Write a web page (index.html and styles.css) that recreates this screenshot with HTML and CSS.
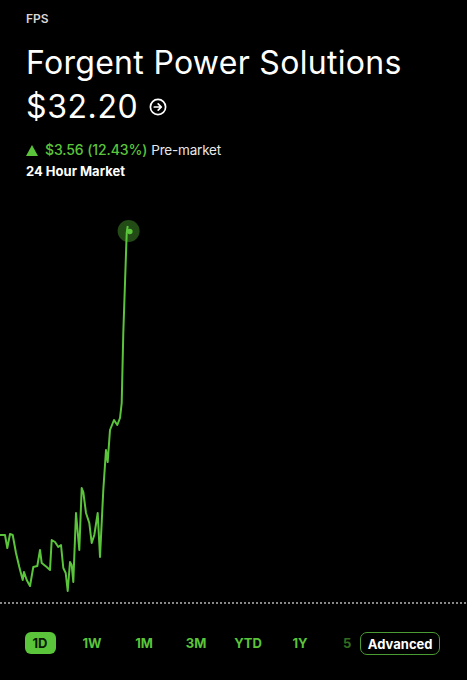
FILE: index.html
```html
<!DOCTYPE html>
<html lang="en">
<head>
    <meta charset="UTF-8">
    <meta name="viewport" content="width=device-width, initial-scale=1.0">
    <title>FPS - Forgent Power Solutions</title>
    <link rel="stylesheet" href="styles.css">
</head>
<body>
    <div class="quote">
        <div class="symbol">FPS</div>
        <h1 class="name">Forgent Power Solutions</h1>
        <div class="price-row">
            <span class="price">$32.20</span>
            <svg class="price-arrow" width="18" height="18" viewBox="0 0 18 18">
                <circle cx="9" cy="9" r="7.6" fill="none" stroke="#fff" stroke-width="1.7"/>
                <path d="M5.3 9H12.3M9.2 5.9L12.3 9L9.2 12.1" fill="none" stroke="#fff" stroke-width="1.7" stroke-linecap="round" stroke-linejoin="round"/>
            </svg>
        </div>
        <div class="change">
            <span class="up-arrow"></span>
            <span class="change-value">$3.56 (12.43%)</span>
            <span class="session">Pre-market</span>
        </div>
        <div class="market">24 Hour Market</div>
    </div>

    <!-- intraday chart, viewBox uses page coordinates -->
    <svg class="chart" width="467" height="430" viewBox="0 190 467 430">
        <polyline class="line" points="0,535 5,535 7.3,548 10,534 12.7,535 16,553 19.3,567 22.7,580 24,572 26.7,580 30,586 33.3,567 37.3,566 40,550 41.7,563 46.7,567 50,570 51.7,540 55,542 58.3,547 61,545 63.3,568 65.7,573 67.7,591 70,562 71.7,565 73.3,582 76,513 79.3,550 81.7,488 83.3,492 86,513 89.3,523 91.7,543 94.3,535 97.7,513 100,557 103.3,490 106,450 107.7,462 110,430 114,420 117.3,425 120,418 121.7,403 123.3,333 125,283 126.7,233 127.7,226"/>
        <circle cx="128.6" cy="231" r="11" class="glow"/>
        <circle cx="129.8" cy="231.5" r="2.8" class="dot"/>
        <line x1="0" y1="603" x2="467" y2="603" class="baseline"/>
    </svg>

    <div class="ranges">
        <div class="tabs">
            <span class="tab"><span class="pill">1D</span></span>
            <span class="tab">1W</span>
            <span class="tab">1M</span>
            <span class="tab">3M</span>
            <span class="tab">YTD</span>
            <span class="tab">1Y</span>
            <span class="tab">5Y</span>
        </div>
        <button class="advanced">Advanced</button>
    </div>
</body>
</html>
```

FILE: styles.css
```css
body {
    margin: 0;
    background: #000;
    color: #fff;
    font-family: Inter, "Noto Sans", sans-serif;
    width: 467px;
    height: 680px;
    overflow: hidden;
}

.quote {
    padding: 12px 26px 0;
}

.symbol {
    font-size: 12px;
    font-weight: 600;
    line-height: 14px;
    color: #d6d6d6;
}

.name {
    margin: 18px 0 0;
    font-size: 32px;
    font-weight: 400;
    line-height: 38px;
    letter-spacing: 0.3px;
}

.price-row {
    display: flex;
    align-items: center;
    gap: 11px;
    margin-top: 6px;
}

.price {
    font-size: 32px;
    line-height: 38px;
    letter-spacing: 0.6px;
}

.price-arrow {
    display: block;
}

.change {
    display: flex;
    align-items: center;
    margin-top: 15px;
    font-size: 14px;
    line-height: 18px;
}

.up-arrow {
    width: 0;
    height: 0;
    border-left: 6.5px solid transparent;
    border-right: 6.5px solid transparent;
    border-bottom: 11px solid #5ac53a;
    margin-right: 7px;
}

.change-value {
    color: #5ac53a;
    font-weight: 500;
    letter-spacing: -0.1px;
    margin-right: 4px;
}

.session {
    color: #e8e8e8;
    font-size: 13.5px;
    letter-spacing: -0.2px;
}

.market {
    margin-top: 4px;
    font-size: 13px;
    font-weight: 700;
    line-height: 16px;
}

.chart {
    display: block;
    margin-top: 11px;
}

.line {
    fill: none;
    stroke: #5ac53a;
    stroke-width: 2;
    stroke-linejoin: round;
}

.glow {
    fill: #5ac53a;
    opacity: 0.38;
}

.dot {
    fill: #5ac53a;
}

.baseline {
    stroke: #b5b5b5;
    stroke-width: 1.4;
    stroke-dasharray: 2 2;
}

.ranges {
    position: relative;
    margin-top: 12px;
    height: 24px;
}

.tabs {
    display: flex;
    width: 337px;
    padding-left: 14px;
    overflow: hidden;
    white-space: nowrap;
}

.tab {
    flex: 0 0 52px;
    text-align: center;
    font-size: 13px;
    font-weight: 700;
    line-height: 22px;
    color: #5ac53a;
}

.pill {
    display: inline-block;
    padding: 0 8px;
    background: #5ac53a;
    color: #0b1a06;
    border-radius: 6px;
    line-height: 22px;
}

.advanced {
    position: absolute;
    top: 0;
    right: 27px;
    height: 23px;
    padding: 0 6.5px;
    background: #000;
    color: #fff;
    border: 1.5px solid #4a9b33;
    border-radius: 7px;
    font-family: Inter, "Noto Sans", sans-serif;
    font-size: 13px;
    font-weight: 700;
}

.advanced::before {
    content: "";
    position: absolute;
    top: -2px;
    bottom: -2px;
    left: -20px;
    width: 19px;
    background: rgba(0, 0, 0, 0.45);
}
```
